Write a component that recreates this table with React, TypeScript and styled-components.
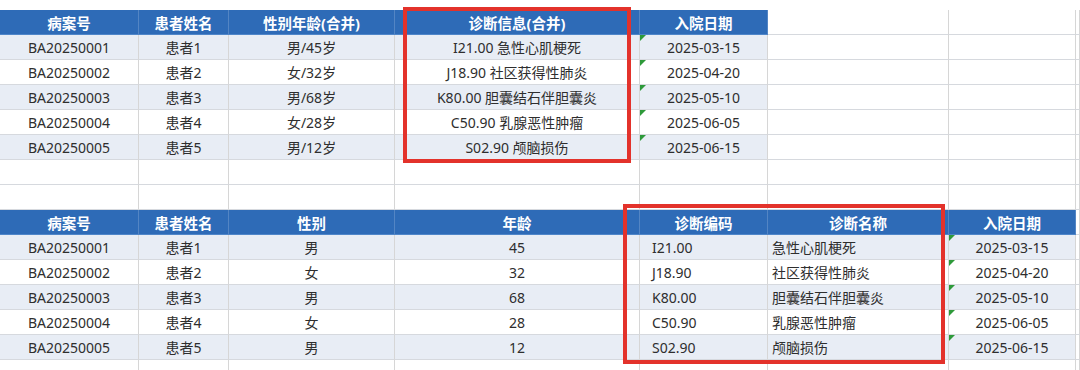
import React from "react"
import styled, { createGlobalStyle } from "styled-components"

const GlobalStyle = createGlobalStyle`
  html, body {
    margin: 0;
    padding: 0;
    background: #ffffff;
    overflow: hidden;
  }
  body {
    font-family: "Noto Sans", "Noto Sans CJK SC", sans-serif;
    color: #333;
  }
`

const COLS = "139px 90px 166px 245px 128px 181px 127px 1fr"

const Sheet = styled.div`
  position: relative;
  width: 1080px;
  height: 370px;
  overflow: hidden;
`

// the line above the tables is scrolled almost out of view
const CaptionRow = styled.div`
  height: 10px;
  overflow: hidden;
  padding-left: 112px;
`

const CaptionText = styled.div`
  font-size: 15px;
  line-height: 20px;
  margin-top: -19px;
  color: #444;
  white-space: nowrap;
  letter-spacing: 1px;
`

const Row = styled.div`
  display: grid;
  grid-template-columns: ${COLS};
  height: 25px;
`

type CellKind = "head" | "odd" | "even" | "blank"

const Cell = styled.div<{ $kind: CellKind; $align?: "left" | "center"; $pad?: number }>`
  position: relative;
  box-sizing: border-box;
  height: 25px;
  display: flex;
  align-items: center;
  justify-content: ${(p) => (p.$align === "left" ? "flex-start" : "center")};
  padding-left: ${(p) => (p.$pad ? `${p.$pad}px` : "0")};
  font-size: ${(p) => (p.$kind === "head" ? "14.5px" : "14px")};
  font-weight: ${(p) => (p.$kind === "head" ? 700 : 400)};
  white-space: nowrap;
  color: ${(p) => (p.$kind === "head" ? "#ffffff" : "#2e2e2e")};
  background: ${(p) =>
    p.$kind === "head" ? "#2e6bb7" : p.$kind === "odd" ? "#e8edf5" : "#ffffff"};
  border-right: 1px solid
    ${(p) => (p.$kind === "head" ? "rgba(255,255,255,0.18)" : "#d6d6d6")};
  border-bottom: 1px solid ${(p) => (p.$kind === "head" ? "#4f86c9" : "#d6d9de")};
`

const TextFlag = styled.span`
  position: absolute;
  top: 0;
  left: 0;
  width: 0;
  height: 0;
  border-top: 6px solid #2e9a3a;
  border-right: 6px solid transparent;
`

const Highlight = styled.div<{ $x: number; $y: number; $w: number; $h: number }>`
  position: absolute;
  left: ${(p) => p.$x}px;
  top: ${(p) => p.$y}px;
  width: ${(p) => p.$w}px;
  height: ${(p) => p.$h}px;
  box-sizing: border-box;
  border: 4px solid #e3322b;
  pointer-events: none;
`

const patients = [
  { id: "BA20250001", name: "患者1", sex: "男", age: 45, code: "I21.00", diag: "急性心肌梗死", date: "2025-03-15" },
  { id: "BA20250002", name: "患者2", sex: "女", age: 32, code: "J18.90", diag: "社区获得性肺炎", date: "2025-04-20" },
  { id: "BA20250003", name: "患者3", sex: "男", age: 68, code: "K80.00", diag: "胆囊结石伴胆囊炎", date: "2025-05-10" },
  { id: "BA20250004", name: "患者4", sex: "女", age: 28, code: "C50.90", diag: "乳腺恶性肿瘤", date: "2025-06-05" },
  { id: "BA20250005", name: "患者5", sex: "男", age: 12, code: "S02.90", diag: "颅脑损伤", date: "2025-06-15" },
]

const BlankCells = ({ count }: { count: number }) => (
  <>
    {Array.from({ length: count }, (_, i) => (
      <Cell key={`b${i}`} $kind="blank" />
    ))}
  </>
)

export default function App() {
  return (
    <>
      <GlobalStyle />
      <Sheet>
        <CaptionRow>
          <CaptionText>
            示例：将合并列拆分为多列 —— 性别年龄拆为性别、年龄，诊断信息拆为诊断编码、诊断名称
          </CaptionText>
        </CaptionRow>

        {/* merged layout */}
        <Row>
          <Cell $kind="head">病案号</Cell>
          <Cell $kind="head">患者姓名</Cell>
          <Cell $kind="head">性别年龄(合并)</Cell>
          <Cell $kind="head">诊断信息(合并)</Cell>
          <Cell $kind="head">入院日期</Cell>
          <BlankCells count={3} />
        </Row>
        {patients.map((p, i) => {
          const kind: CellKind = i % 2 === 0 ? "odd" : "even"
          return (
            <Row key={p.id}>
              <Cell $kind={kind}>{p.id}</Cell>
              <Cell $kind={kind}>{p.name}</Cell>
              <Cell $kind={kind}>
                {p.sex}/{p.age}岁
              </Cell>
              <Cell $kind={kind}>
                {p.code} {p.diag}
              </Cell>
              <Cell $kind={kind}>
                <TextFlag />
                {p.date}
              </Cell>
              <BlankCells count={3} />
            </Row>
          )
        })}
        <Row>
          <BlankCells count={8} />
        </Row>
        <Row>
          <BlankCells count={8} />
        </Row>

        {/* split layout */}
        <Row>
          <Cell $kind="head">病案号</Cell>
          <Cell $kind="head">患者姓名</Cell>
          <Cell $kind="head">性别</Cell>
          <Cell $kind="head">年龄</Cell>
          <Cell $kind="head">诊断编码</Cell>
          <Cell $kind="head">诊断名称</Cell>
          <Cell $kind="head">入院日期</Cell>
          <BlankCells count={1} />
        </Row>
        {patients.map((p, i) => {
          const kind: CellKind = i % 2 === 0 ? "odd" : "even"
          return (
            <Row key={`s-${p.id}`}>
              <Cell $kind={kind}>{p.id}</Cell>
              <Cell $kind={kind}>{p.name}</Cell>
              <Cell $kind={kind}>{p.sex}</Cell>
              <Cell $kind={kind}>{p.age}</Cell>
              <Cell $kind={kind} $align="left" $pad={12}>
                {p.code}
              </Cell>
              <Cell $kind={kind} $align="left" $pad={4}>
                {p.diag}
              </Cell>
              <Cell $kind={kind}>
                <TextFlag />
                {p.date}
              </Cell>
              <BlankCells count={1} />
            </Row>
          )
        })}
        <Row>
          <BlankCells count={8} />
        </Row>

        <Highlight $x={403} $y={7} $w={228} $h={156} />
        <Highlight $x={623} $y={204} $w={322} $h={160} />
      </Sheet>
    </>
  )
}
